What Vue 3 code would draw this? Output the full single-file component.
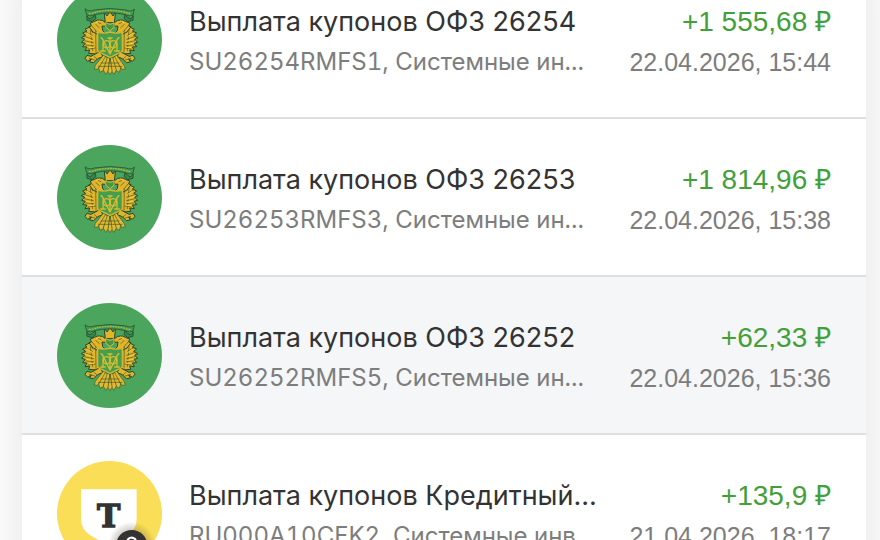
<template>
  <main class="page">
    <ul class="operations">
      <li v-for="item in operations" :key="item.code">
        <button type="button" class="operation" :class="{ active: item.active }">
          <svg v-if="item.logo === 'minfin'" class="logo" viewBox="21 15 315 315" aria-hidden="true">
            <circle cx="178.500" cy="172.500" r="157.500" fill="#4ba55c" />
            <use href="#eagle" />
          </svg>
          <svg v-else class="logo" viewBox="21 66 315 315" aria-hidden="true">
            <defs>
              <radialGradient id="badge-shadow">
                <stop offset="0.6" stop-color="#5a4630" stop-opacity="0.3" />
                <stop offset="1" stop-color="#5a4630" stop-opacity="0" />
              </radialGradient>
            </defs>
            <circle cx="178.500" cy="223.500" r="157.500" fill="#fade57" />
            <path d="M93 151H260V240Q260 272 232 289L177 321L121 289Q93 272 93 240Z" fill="#fff" />
            <text x="176" y="263" text-anchor="middle" class="logo-letter">T</text>
            <circle cx="245" cy="320" r="72" fill="url(#badge-shadow)" />
            <circle cx="245" cy="320" r="47" fill="#333" />
            <circle cx="245" cy="309" r="13" fill="none" stroke="#fff" stroke-width="7" />
          </svg>

          <span class="info">
            <span class="title">{{ item.title }}</span>
            <span class="details">{{ item.code }}, {{ item.account }}</span>
          </span>
          <span class="payment">
            <span class="amount">{{ item.amount }}</span>
            <span class="date">{{ item.date }}</span>
          </span>
        </button>
      </li>
    </ul>

    <!-- Герб, общий для всех строк ОФЗ -->
    <svg class="sprite" aria-hidden="true">
      <defs>
        <g id="eagle" stroke-linecap="round" stroke-linejoin="round">
          <g stroke="#29472e" stroke-width="3" fill="#e0b42b">
            <path d="M121 134L105 142L111 147L98 153L107 160L94 167L104 171L95 181L106 184L98 194L111 195L105 206L119 204L116 214L148 217L146 150L138 141L128 150Z" />
            <path d="M237 134L253 142L247 147L260 153L251 160L264 167L254 171L263 181L252 184L260 194L247 195L253 206L239 204L242 214L210 217L212 150L220 141L230 150Z" />
            <path d="M144 158L129 150L117 134L124 132L121 123L134 118L142 114L157 115L169 124L166 133L156 132L158 146L170 158Z" />
            <path d="M216 158L231 150L243 134L236 132L239 123L226 118L218 114L203 115L191 124L194 133L204 132L202 146L190 158Z" />
            <path d="M163 90L171 102L180 88L189 102L197 90L193 122H167Z" />
            <path d="M149 209L123 223L111 220L105 229L113 238L124 231L119 240L131 242L143 230L158 224Z" />
            <path d="M211 209L237 223L249 220L255 229L247 238L236 231L241 240L229 242L217 230L202 224Z" />
          </g>
          <g stroke="#3b5a2e" stroke-width="2" fill="#e5b92e">
            <path d="M160 220L136 250L133 261L142 262L170 228Z" />
            <path d="M200 220L222 250L226 261L217 262L190 228Z" />
            <path d="M166 224L146 258L150 271L159 266L174 230Z" />
            <path d="M194 224L212 258L208 271L199 266L186 230Z" />
            <path d="M172 226L160 264L167 277L175 266L179 230Z" />
            <path d="M188 226L199 264L192 277L184 266L181 230Z" />
            <path d="M180 228L174 268L180 278L186 268Z" />
          </g>
          <g fill="none" stroke="#4a552b" stroke-width="2">
            <path d="M106 149L127 160M101 163L128 172M103 176L130 182M107 189L131 191M114 201L136 198M121 144L128 206M137 146L138 211" />
            <path d="M252 149L233 160M257 163L230 172M255 176L230 182M251 189L229 191M244 201L224 198M237 144L232 206M223 146L222 211" />
            <path d="M137 127L148 137M144 121L153 125M223 127L212 137M216 121L207 125M126 132L139 148M234 132L221 148" />
            <path d="M153 243L207 243M145 253L216 253M118 229L134 234M133 224L142 232M242 229L226 234M227 224L218 232" />
          </g>
          <g fill="none" stroke="#f4ce36" stroke-width="3">
            <path d="M112 154L126 163M107 169L127 176M110 184L128 187M118 197L131 196M248 154L234 163M253 169L233 176M250 184L232 187M242 197L229 196M137 123L149 117M223 123L211 117" />
          </g>
          <path d="M143 151Q163 156 180 150Q197 156 217 151V204Q216 211 205 214L180 226L156 214Q143 211 143 204Z" fill="#459d4e" stroke="#d6b52f" stroke-width="4" />
          <path d="M168 122Q180 132 192 122V136L180 146L168 136Z" fill="#41984b" stroke="#dfb832" stroke-width="3" />
          <!-- Вензель на щите -->
          <g fill="none" stroke="#d5bd31" stroke-width="4">
            <path d="M153 167Q163 173 159 186V206M152 207H166M207 167Q197 173 201 186V206M194 207H208M160 176L180 216L200 176M180 167V216M174 168H186" />
            <ellipse cx="170" cy="187" rx="10" ry="11" />
            <ellipse cx="190" cy="187" rx="10" ry="11" />
          </g>
          <path d="M106 81Q116 91 133 84Q181 75 228 84Q244 91 253 81L249 99Q238 106 226 98Q181 87 134 98Q120 106 111 99Z" fill="#459d53" stroke="#2a6039" stroke-width="3" />
          <path d="M118 94Q133 94 142 89Q181 82 219 89Q231 94 241 94" fill="none" stroke="#bab83e" stroke-width="4" stroke-dasharray="2 6" />
          <path d="M111 102Q117 116 128 105L135 99L138 109L127 119L112 115Z" fill="#378746" stroke="#285136" stroke-width="3" />
          <path d="M249 102Q243 116 232 105L225 99L222 109L233 119L248 115Z" fill="#378746" stroke="#285136" stroke-width="3" />
        </g>
      </defs>
    </svg>
  </main>
</template>

<script setup>
const operations = [
  {
    logo: 'minfin',
    title: 'Выплата купонов ОФЗ 26254',
    code: 'SU26254RMFS1',
    account: 'Системные ин...',
    amount: '+1 555,68 ₽',
    date: '22.04.2026, 15:44',
  },
  {
    logo: 'minfin',
    title: 'Выплата купонов ОФЗ 26253',
    code: 'SU26253RMFS3',
    account: 'Системные ин...',
    amount: '+1 814,96 ₽',
    date: '22.04.2026, 15:38',
  },
  {
    logo: 'minfin',
    title: 'Выплата купонов ОФЗ 26252',
    code: 'SU26252RMFS5',
    account: 'Системные ин...',
    amount: '+62,33 ₽',
    date: '22.04.2026, 15:36',
    active: true,
  },
  {
    logo: 'tbank',
    title: 'Выплата купонов Кредитный...',
    code: 'RU000A10CFK2',
    account: 'Системные инв...',
    amount: '+135,9 ₽',
    date: '21.04.2026, 18:17',
  },
];
</script>

<style>
body {
  margin: 0;
  background: #fff;
}
</style>

<style scoped>
.page {
  height: 100vh;
  padding: 0 14px 0 22px;
  box-sizing: border-box;
  overflow: hidden;
  font-family: Inter, "Liberation Sans", sans-serif;
}

.operations {
  margin: -39px 0 0;
  padding: 0;
  list-style: none;
  background: #fff;
  box-shadow: 0 0 48px rgba(0, 0, 0, 0.12);
}

.operation {
  display: flex;
  align-items: flex-start;
  width: 100%;
  padding: 26px 35px 25px;
  border: none;
  border-bottom: 2px solid #dddfe0;
  background: #fff;
  font-family: inherit;
  text-align: left;
  cursor: pointer;
}

.operation.active {
  background: #f5f6f8;
}

.logo {
  flex: none;
  width: 105px;
  height: 105px;
  margin-right: 27px;
}

.logo-letter {
  font-family: "DejaVu Serif", serif;
  font-size: 94px;
  font-weight: bold;
  fill: #333;
  stroke: #333;
  stroke-width: 4px;
}

.info,
.payment {
  display: flex;
  flex-direction: column;
  padding-top: 15px;
  line-height: 40px;
  white-space: nowrap;
}

.info {
  flex: 1;
  min-width: 0;
}

.payment {
  align-items: flex-end;
  font-family: "Liberation Sans", Arial, sans-serif;
}

.title {
  font-size: 27px;
  color: #333;
}

.amount {
  font-size: 28px;
  color: #43a038;
}

.details {
  font-size: 24px;
  font-variant-numeric: tabular-nums;
  color: #7d7d7d;
}

.date {
  font-size: 25px;
  color: #7d7d7d;
}

.sprite {
  position: absolute;
  width: 0;
  height: 0;
}
</style>
